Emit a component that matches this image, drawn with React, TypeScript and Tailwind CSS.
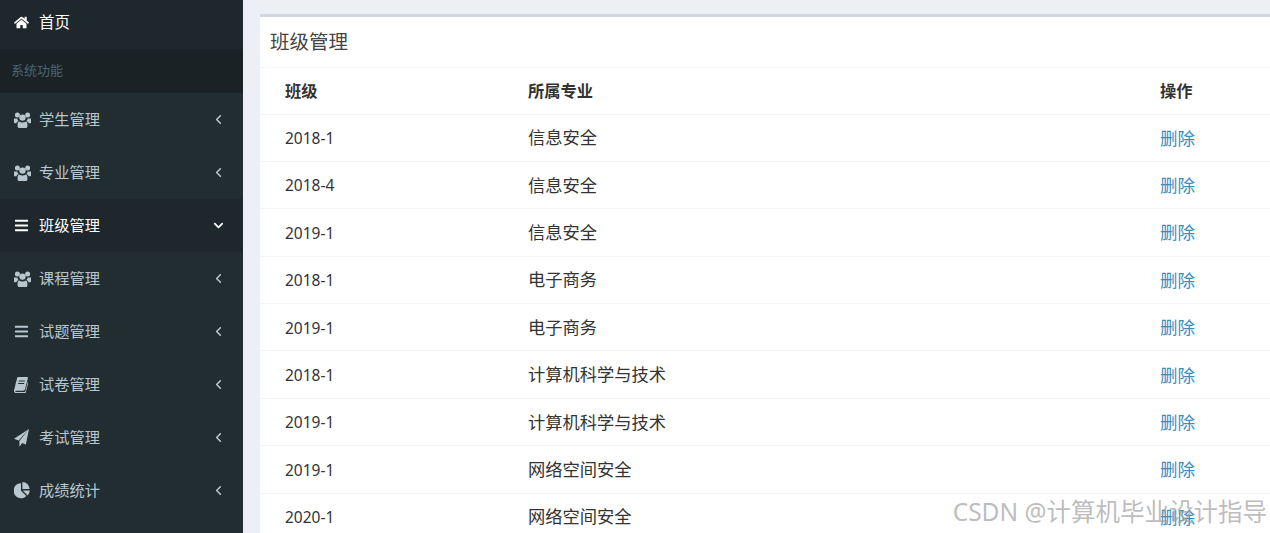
import React from 'react';
import { FaHome, FaBars } from 'react-icons/fa';
import { ChevronLeft, ChevronDown } from 'lucide-react';

function UsersIcon() {
  return (
    <svg viewBox="0 0 17 16" className="h-[16px] w-[17px]" fill="currentColor">
      <circle cx="3.4" cy="3" r="2.5" />
      <circle cx="13.6" cy="3" r="2.5" />
      <path d="M0 6.5h3.2c.2 1 .7 1.8 1.4 2.4-1.2.5-2 1.4-2.3 2.4H1c-.6 0-1-.4-1-1zM17 6.5h-3.2c-.2 1-.7 1.8-1.4 2.4 1.2.5 2 1.4 2.3 2.4H16c.6 0 1-.4 1-1z" />
      <circle cx="8.5" cy="5.6" r="3.2" />
      <path d="M5 9.6c1 .7 2.2 1 3.5 1s2.5-.3 3.5-1c1 .5 1.4 1.6 1.4 3v1.6c0 1-.7 1.8-1.7 1.8H5.300c-1 0-1.700-.8-1.700-1.800v-1.600c0-1.400.4-2.500 1.400-3z" />
    </svg>
  );
}

function BookIcon() {
  return (
    <svg viewBox="0 0 14 16" className="h-[16px] w-[14px]" fill="currentColor">
      <path fillRule="evenodd" d="M4.300 0H13c.8 0 1.100.6.900 1.300L11 12.300c-.3 1-.9 1.400-1.900 1.400H2.200c-.6 0-.9.3-.9.700s.4.600 1 .6h8.100c.4 0 .8-.3 1-.7l2.300-9.300.6.500-2.500 9.900c-.2.900-.8 1.600-1.900 1.600H2.300C.8 16 0 15.100 0 13.900c0-.4 0-.7.100-1L3 1.400C3.200.5 3.600 0 4.300 0zM5 3.500l-.3 1.100h6l.3-1.100zM4.300 6l-.3 1.100h6l.3-1.100z" />
    </svg>
  );
}

function PlaneIcon() {
  return (
    <svg viewBox="0 0 15 18" className="h-[18px] w-[15px]" fill="currentColor">
      <path d="M15 0 0 9.800l4.600 1.800zM15 0 5.400 12.100v5.700l2.800-3.800 3.600 1.500z" />
    </svg>
  );
}

function PieIcon() {
  return (
    <svg viewBox="0 0 16 17" className="h-[17px] w-[16px]" fill="currentColor">
      <path d="M7 1.200v7.500l5.300 5.300A7.500 7.500 0 1 1 7 1.200z" />
      <path d="M8.400 0a7.500 7.500 0 0 1 7.200 7H8.400z" />
      <path d="M8.700 8.500h7.200a7.500 7.500 0 0 1-2.300 4.900z" />
    </svg>
  );
}

function BarsIcon() {
  return <FaBars className="text-[15px]" />;
}

const menu = [
  { icon: UsersIcon, label: '学生管理' },
  { icon: UsersIcon, label: '专业管理' },
  { icon: BarsIcon, label: '班级管理', active: true },
  { icon: UsersIcon, label: '课程管理' },
  { icon: BarsIcon, label: '试题管理' },
  { icon: BookIcon, label: '试卷管理' },
  { icon: PlaneIcon, label: '考试管理' },
  { icon: PieIcon, label: '成绩统计' },
];

const rows = [
  ['2018-1', '信息安全'],
  ['2018-4', '信息安全'],
  ['2019-1', '信息安全'],
  ['2018-1', '电子商务'],
  ['2019-1', '电子商务'],
  ['2018-1', '计算机科学与技术'],
  ['2019-1', '计算机科学与技术'],
  ['2019-1', '网络空间安全'],
  ['2020-1', '网络空间安全'],
];

export default function App() {
  return (
    <div className="relative flex h-[533px] w-[1270px] overflow-hidden bg-[#ecf0f5] font-['Noto_Sans','Noto_Sans_CJK_SC',sans-serif]">
      <aside className="w-[243px] shrink-0 bg-[#222d32]">
        <div className="flex h-[49px] items-center bg-[#1e282c] pb-[4px] pl-[14px] text-[15.5px] text-white">
          <FaHome className="w-[15px] text-[15px]" />
          <span className="ml-[10px]">首页</span>
        </div>
        <div className="flex h-[44px] items-center bg-[#1a2226] pl-[11px] text-[13px] text-[#4b646f]">系统功能</div>
        {menu.map((item) => (
          <div
            key={item.label}
            className={
              item.active
                ? 'flex h-[53px] items-center bg-[#1e282c] pl-[14px] pr-[17px] text-[15.25px] text-white'
                : 'flex h-[53px] items-center pl-[14px] pr-[17px] text-[15.25px] text-[#b8c7ce]'
            }
          >
            <span className="flex w-[17px] justify-start">
              <item.icon />
            </span>
            <span className="ml-[8px] flex-1">{item.label}</span>
            {item.active ? (
              <ChevronDown size={15} strokeWidth={2.75} />
            ) : (
              <ChevronLeft size={15} strokeWidth={2.5} />
            )}
          </div>
        ))}
      </aside>

      <main className="flex-1 pl-[17px] pt-[14px]">
        <div className="h-full border-t-[3px] border-[#d2d6de] bg-white text-[#333]">
          <div className="flex h-[51px] items-center border-b border-[#f4f4f4] pl-[10px] text-[19.5px] text-[#444]">班级管理</div>
          <table className="w-full table-fixed border-collapse">
            <thead>
              <tr className="h-[46px] border-b border-[#f4f4f4] text-left text-[16.25px] font-bold">
                <th className="w-[268px] pl-[25px] font-bold">班级</th>
                <th className="w-[632px] font-bold">所属专业</th>
                <th className="font-bold">操作</th>
              </tr>
            </thead>
            <tbody>
              {rows.map((row, index) => (
                <tr key={index} className="h-[47.4px] border-b border-[#f4f4f4]">
                  <td className="pl-[25px] pt-[2px] text-[15.5px]">{row[0]}</td>
                  <td className="pt-px text-[17.25px]">{row[1]}</td>
                  <td className="text-[17.5px] text-[#3c8dbc]">删除</td>
                </tr>
              ))}
            </tbody>
          </table>
        </div>
      </main>

      <div className="absolute bottom-[2px] right-[3px] text-[24.5px] text-[#a0a0a0]/70">CSDN @计算机毕业设计指导</div>
    </div>
  );
}
